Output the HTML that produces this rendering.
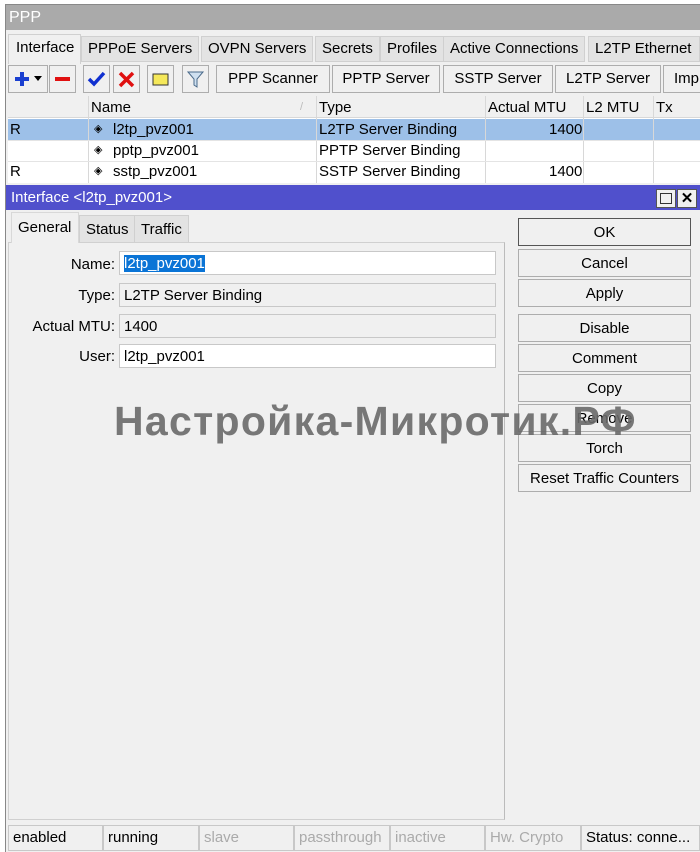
<!DOCTYPE html>
<html><head><meta charset="utf-8"><style>
*{box-sizing:border-box;margin:0;padding:0}
body{width:700px;height:852px;overflow:hidden;background:#fff;font-family:"Liberation Sans",Arial,sans-serif;font-size:15px;color:#000;position:relative}
.a{position:absolute}
.btn{position:absolute;background:#f0f0f0;border:1px solid #adadad;text-align:center;line-height:24px;font-size:15px}
.tab{position:absolute;top:36px;height:26px;background:#e3e3e3;border:1px solid #d0d0d0;line-height:24px;padding:0 6px;font-size:15px}
.cell{position:absolute;height:21px;line-height:21px;white-space:nowrap;font-size:15px}
.lbl{position:absolute;text-align:right;width:110px;left:5px;font-size:15px}
.fld{position:absolute;left:119px;width:377px;height:24px;border:1px solid #c8c8c8;line-height:24px;padding-left:4px;font-size:15px}
.sb{position:absolute;top:825px;height:26px;line-height:24px;border:1px solid #c8c8c8;padding-left:4px;font-size:15px;background:#f0f0f0}
</style></head><body>
<div class="a" style="left:0;top:0;width:6px;height:852px;background:#fff"></div>
<div class="a" style="left:5px;top:4px;width:695px;height:848px;background:#f0f0f0;border-left:1px solid #888;border-top:1px solid #888"></div>
<div class="a" style="left:6px;top:5px;width:694px;height:25px;background:#aaaaaa;color:#fff;font-size:16px;line-height:25px;padding-left:3px">PPP</div>
<div class="a" style="left:8px;top:34px;width:73px;height:30px;background:#f0f0f0;border:1px solid #d0d0d0;border-bottom:none;line-height:26px;padding-left:7px">Interface</div>
<div class="tab" style="left:81px">PPPoE Servers</div>
<div class="tab" style="left:201px">OVPN Servers</div>
<div class="tab" style="left:315px">Secrets</div>
<div class="tab" style="left:380px">Profiles</div>
<div class="tab" style="left:443px">Active Connections</div>
<div class="tab" style="left:588px;width:112px">L2TP Ethernet</div>
<div class="btn" style="left:8px;top:65px;width:40px;height:28px"><svg width="38" height="26"><path d="M6 13h14M13 6v14" stroke="#1a3fd0" stroke-width="4"/><path d="M25 10h8l-4 5z" fill="#000"/></svg></div>
<div class="btn" style="left:49px;top:65px;width:27px;height:28px"><svg width="25" height="26"><rect x="5" y="11" width="15" height="4" fill="#e01010"/></svg></div>
<div class="btn" style="left:83px;top:65px;width:27px;height:28px"><svg width="25" height="26"><path d="M5 13l5 5 10-11" stroke="#1030d0" stroke-width="3.5" fill="none"/></svg></div>
<div class="btn" style="left:113px;top:65px;width:27px;height:28px"><svg width="25" height="26"><path d="M6 7l13 13M19 7L6 20" stroke="#e01010" stroke-width="3.5"/></svg></div>
<div class="btn" style="left:147px;top:65px;width:27px;height:28px"><svg width="25" height="26"><rect x="5" y="8" width="15" height="11" fill="#f5e85a" stroke="#333"/></svg></div>
<div class="btn" style="left:182px;top:65px;width:27px;height:28px"><svg width="25" height="26"><path d="M5 6h15l-6 7v8l-3-2v-6z" fill="#cfe0f0" stroke="#4a6a8a"/></svg></div>
<div class="btn" style="left:216px;top:65px;width:114px;height:28px;line-height:26px">PPP Scanner</div>
<div class="btn" style="left:332px;top:65px;width:108px;height:28px;line-height:26px">PPTP Server</div>
<div class="btn" style="left:443px;top:65px;width:110px;height:28px;line-height:26px">SSTP Server</div>
<div class="btn" style="left:555px;top:65px;width:106px;height:28px;line-height:26px">L2TP Server</div>
<div class="btn" style="left:663px;top:65px;width:40px;height:28px;line-height:26px;text-align:left;padding-left:10px">Imp</div>
<div class="a" style="left:8px;top:96px;width:692px;height:87px;background:#fff"></div>
<div class="a" style="left:8px;top:96px;width:692px;height:22px;background:#f0f0f0;border-bottom:1px solid #d8d8d8"></div>
<div class="a" style="left:8px;top:119px;width:692px;height:21px;background:#9dc0e8"></div>
<div class="a" style="left:88px;top:96px;width:1px;height:87px;background:#d8d8d8"></div>
<div class="a" style="left:316px;top:96px;width:1px;height:87px;background:#d8d8d8"></div>
<div class="a" style="left:485px;top:96px;width:1px;height:87px;background:#d8d8d8"></div>
<div class="a" style="left:583px;top:96px;width:1px;height:87px;background:#d8d8d8"></div>
<div class="a" style="left:653px;top:96px;width:1px;height:87px;background:#d8d8d8"></div>
<div class="a" style="left:8px;top:140px;width:692px;height:1px;background:#e4e4e4"></div>
<div class="a" style="left:8px;top:161px;width:692px;height:1px;background:#e4e4e4"></div>
<div class="cell" style="left:91px;top:97px">Name</div><div class="cell" style="left:300px;top:97px;color:#bbb;font-size:11px">/</div>
<div class="cell" style="left:319px;top:97px">Type</div>
<div class="cell" style="left:488px;top:97px">Actual MTU</div>
<div class="cell" style="left:586px;top:97px">L2 MTU</div>
<div class="cell" style="left:656px;top:97px">Tx</div>
<div class="cell" style="left:10px;top:119px">R</div>
<div class="cell" style="left:94px;top:119px;font-size:11px">◈</div><div class="cell" style="left:113px;top:119px">l2tp_pvz001</div>
<div class="cell" style="left:319px;top:119px">L2TP Server Binding</div>
<div class="cell" style="left:549px;top:119px">1400</div>
<div class="cell" style="left:94px;top:140px;font-size:11px">◈</div><div class="cell" style="left:113px;top:140px">pptp_pvz001</div>
<div class="cell" style="left:319px;top:140px">PPTP Server Binding</div>
<div class="cell" style="left:10px;top:161px">R</div>
<div class="cell" style="left:94px;top:161px;font-size:11px">◈</div><div class="cell" style="left:113px;top:161px">sstp_pvz001</div>
<div class="cell" style="left:319px;top:161px">SSTP Server Binding</div>
<div class="cell" style="left:549px;top:161px">1400</div>
<div class="a" style="left:6px;top:185px;width:694px;height:25px;background:#5050cc;color:#fff;line-height:25px;padding-left:5px;font-size:15px">Interface &lt;l2tp_pvz001&gt;</div>
<div class="a" style="left:656px;top:189px;width:20px;height:19px;background:#f0f0f0;border:1px solid #555"><div style="margin:3px;width:12px;height:11px;border:1.5px solid #333"></div></div>
<div class="a" style="left:677px;top:189px;width:20px;height:19px;background:#f0f0f0;border:1px solid #555;text-align:center;line-height:17px;font-weight:bold;font-size:15px">✕</div>
<div class="a" style="left:8px;top:242px;width:497px;height:578px;border:1px solid #d0d0d0;border-right:1px solid #bbb"></div>
<div class="a" style="left:11px;top:212px;width:68px;height:31px;background:#f0f0f0;border:1px solid #d8d8d8;border-bottom:none;line-height:30px;padding-left:6px">General</div>
<div class="tab" style="left:79px;top:215px;height:28px;line-height:28px">Status</div>
<div class="tab" style="left:134px;top:215px;height:28px;line-height:28px">Traffic</div>
<div class="lbl" style="top:256px">Name:</div>
<div class="fld" style="top:251px;background:#fff"><span style="background:#0a74d6;color:#fff">l2tp_pvz001</span></div>
<div class="lbl" style="top:287px">Type:</div>
<div class="fld" style="top:283px;background:#f0f0f0">L2TP Server Binding</div>
<div class="lbl" style="top:318px">Actual MTU:</div>
<div class="fld" style="top:314px;background:#f0f0f0">1400</div>
<div class="lbl" style="top:348px">User:</div>
<div class="fld" style="top:344px;background:#fff">l2tp_pvz001</div>
<div class="btn" style="left:518px;top:218px;width:173px;height:28px;border:1px solid #555;line-height:27px">OK</div>
<div class="btn" style="left:518px;top:249px;width:173px;height:28px;line-height:27px">Cancel</div>
<div class="btn" style="left:518px;top:279px;width:173px;height:28px;line-height:27px">Apply</div>
<div class="btn" style="left:518px;top:314px;width:173px;height:28px;line-height:27px">Disable</div>
<div class="btn" style="left:518px;top:344px;width:173px;height:28px;line-height:27px">Comment</div>
<div class="btn" style="left:518px;top:374px;width:173px;height:28px;line-height:27px">Copy</div>
<div class="btn" style="left:518px;top:404px;width:173px;height:28px;line-height:27px">Remove</div>
<div class="btn" style="left:518px;top:434px;width:173px;height:28px;line-height:27px">Torch</div>
<div class="btn" style="left:518px;top:464px;width:173px;height:28px;line-height:27px">Reset Traffic Counters</div>
<div class="a" style="left:114px;top:398px;font-size:41px;font-weight:bold;color:rgba(105,105,105,0.9);white-space:nowrap;letter-spacing:1.3px">Настройка-Микротик.РФ</div>
<div class="sb" style="left:8px;width:95px">enabled</div>
<div class="sb" style="left:103px;width:96px">running</div>
<div class="sb" style="left:199px;width:95px;color:#aaa">slave</div>
<div class="sb" style="left:294px;width:96px;color:#aaa">passthrough</div>
<div class="sb" style="left:390px;width:95px;color:#aaa">inactive</div>
<div class="sb" style="left:485px;width:96px;color:#aaa">Hw. Crypto</div>
<div class="sb" style="left:581px;width:119px">Status: conne...</div>
</body></html>
